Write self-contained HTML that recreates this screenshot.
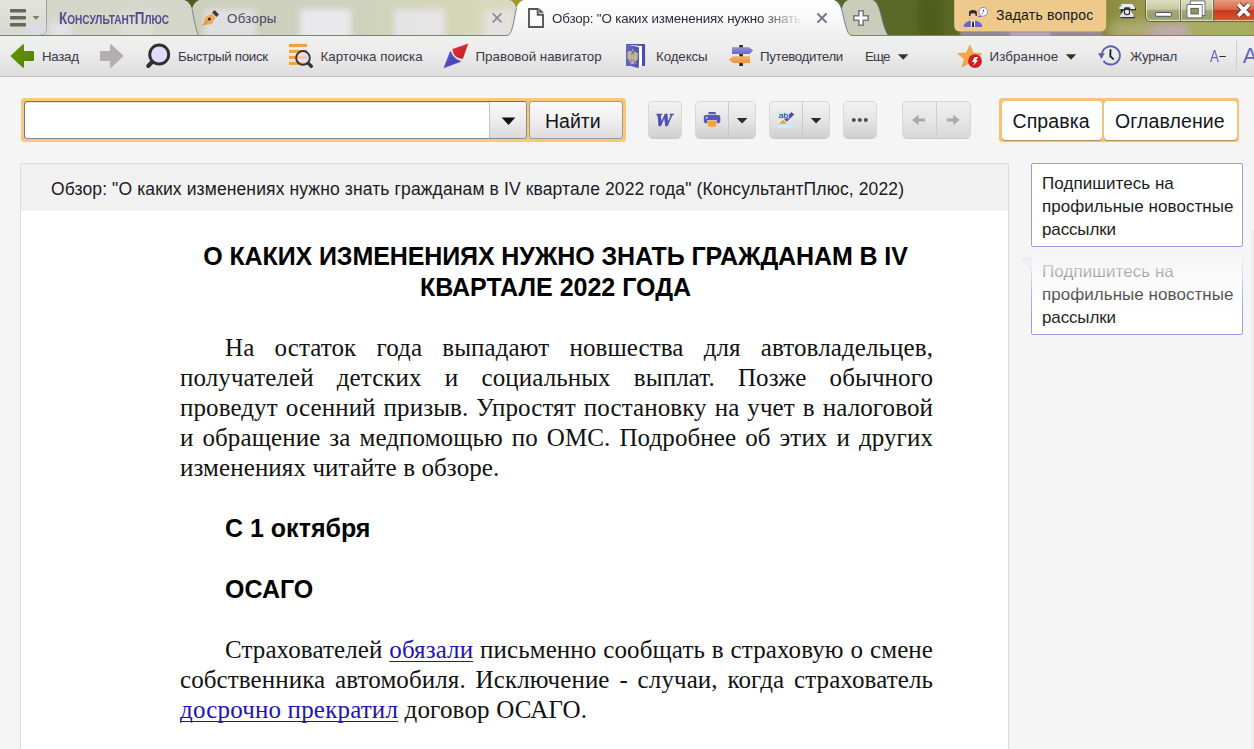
<!DOCTYPE html>
<html lang="ru">
<head>
<meta charset="utf-8">
<title>КонсультантПлюс</title>
<style>
*{box-sizing:border-box;margin:0;padding:0}
html,body{width:1254px;height:749px;overflow:hidden;background:#f5f5f5;font-family:"Liberation Sans",sans-serif;color:#222}
.abs{position:absolute}
#app{position:relative;width:1254px;height:749px;overflow:hidden;background:#f5f5f5}
/* ---------- tab bar ---------- */
#tabbar{position:absolute;left:0;top:0;width:1254px;height:36px;overflow:hidden;
  background:linear-gradient(90deg,#4c5a1c 0,#55621f 700px,#5b6828 900px,#5f6a2a 1000px,#85883a 1100px,#98964a 1135px,#a6a65e 1190px,#a4a85c 1254px)}
#tabbar svg{position:absolute;left:0;top:0}
.tl{position:absolute;white-space:nowrap;font-size:13.33px;line-height:16px;color:#3c3c50}
.sc{font-size:12.600px;text-transform:uppercase}
/* ---------- toolbar ---------- */
#toolbar{position:absolute;left:0;top:36px;width:1254px;height:41px;background:linear-gradient(#f0f0f0,#ececec 40%,#dddddd);border-bottom:1px solid #bdbdbd}
#toolbar svg{position:absolute;left:0;top:0}
.tb{position:absolute;top:13px;white-space:nowrap;font-size:13.33px;line-height:16px;color:#3a3846}
/* ---------- search row ---------- */
.oframe{position:absolute;background:#fcc878;border-radius:3px}
.gbtn{position:absolute;top:101px;height:38px;border-radius:5px;background:linear-gradient(#f2f2f2,#e5e5e5 50%,#cfcfcf);border:1px solid #d8d8d8;border-bottom-color:#c9c9c9}
/* ---------- document ---------- */
#doc{position:absolute;left:20px;top:163px;width:989px;height:600px;background:#fff;border:1px solid #dcdcdc}
#dochead{position:absolute;left:0;top:0;width:987px;height:47px;background:#f1f1f1}
#dochead span{position:absolute;left:30px;top:14px;font-size:17.500px;line-height:22px;white-space:nowrap;color:#1a1a22;letter-spacing:.12px}
.ser{font-family:"Liberation Serif",serif;font-size:25px;line-height:30px;color:#111;letter-spacing:.1px}
.bold{font-family:"Liberation Sans",sans-serif;font-weight:bold;font-size:25px;line-height:31px;color:#000}
.p{position:absolute;left:159px;width:753px}
.ln{display:block;height:30px;white-space:nowrap;text-align:justify;text-align-last:justify}
.ln.last{text-align-last:left}
a.lnk{color:#2212b4;text-decoration:underline;text-decoration-thickness:1px;text-decoration-skip-ink:none;text-underline-offset:3px}
/* ---------- side ---------- */
.side{position:absolute;left:1031px;width:212px;border:1px solid #9c9cde;border-radius:2px;background:#fff;font-size:17px;line-height:23px;padding:8px 0 0 10px;white-space:nowrap}
</style>
</head>
<body>
<div id="app">

<!-- TABBAR -->
<div id="tabbar">
<svg width="1254" height="36" viewBox="0 0 1254 36">
<defs>
  <filter id="bl" x="-20%" y="-20%" width="140%" height="140%"><feGaussianBlur stdDeviation="3"/></filter>
  <filter id="bl1" x="-10%" y="-100%" width="120%" height="300%"><feGaussianBlur stdDeviation="1.3"/></filter>
  <filter id="bl2" x="-20%" y="-40%" width="140%" height="180%"><feGaussianBlur stdDeviation="5"/></filter>
  <linearGradient id="gAct" x1="0" y1="0" x2="0" y2="1"><stop offset="0" stop-color="#ffffff"/><stop offset=".55" stop-color="#f8f8f8"/><stop offset="1" stop-color="#efefef"/></linearGradient>
  <linearGradient id="gInact" x1="0" y1="0" x2="1" y2="0"><stop offset="0" stop-color="#cbcfbc"/><stop offset=".45" stop-color="#cdd1be"/><stop offset=".8" stop-color="#d3d7b6"/><stop offset="1" stop-color="#d9dbc4"/></linearGradient>
  <linearGradient id="gMenu" x1="0" y1="0" x2="0" y2="1"><stop offset="0" stop-color="#e3e4dc"/><stop offset="1" stop-color="#d6d8cf"/></linearGradient>
  <linearGradient id="gRed" x1="0" y1="0" x2="0" y2="1"><stop offset="0" stop-color="#e89a80"/><stop offset=".45" stop-color="#d9674a"/><stop offset=".5" stop-color="#c93a1c"/><stop offset="1" stop-color="#d4572e"/></linearGradient>
  <linearGradient id="gWin" x1="0" y1="0" x2="0" y2="1"><stop offset="0" stop-color="#dcdec0"/><stop offset=".42" stop-color="#c6c9a2"/><stop offset=".5" stop-color="#a4a678"/><stop offset=".8" stop-color="#9aa068"/><stop offset="1" stop-color="#aeb27e"/></linearGradient>
  <clipPath id="cpT2"><path d="M199.5,0 C196,1 193.5,4 192,8.500 L186,36 L523,36 L516.500,8.500 C515,4 513,1 509.500,0 Z"/></clipPath>
</defs>
<!-- glass patches on right -->
<g filter="url(#bl2)">
  <rect x="918" y="-6" width="26" height="46" fill="#4d591a" opacity=".8"/>
  <rect x="1110" y="22" width="40" height="16" fill="#b9b787" opacity=".7"/>
  <rect x="1150" y="24" width="38" height="14" fill="#c4aebe" opacity=".9"/>
  <rect x="1190" y="24" width="64" height="14" fill="#a9b164" opacity=".8"/>
  <rect x="1000" y="30" width="60" height="8" fill="#9b8fa8" opacity=".55"/>
</g>
<rect x="505" y="0" width="24" height="12" fill="#a0962e"/>
<!-- tab 2 (inactive) -->
<path d="M199.5,0 C196,1 193.5,4 192,8.500 L186,36 L523,36 L516.500,8.500 C515,4 513,1 509.500,0 Z" fill="url(#gInact)"/>
<g clip-path="url(#cpT2)"><g filter="url(#bl)">
  <rect x="205" y="9" width="51" height="32" fill="#e6e4e8" opacity=".8"/>
  <rect x="300" y="9" width="51" height="32" fill="#ebe9ef" opacity=".95"/>
  <rect x="394" y="9" width="51" height="32" fill="#e8e5ea" opacity=".9"/>
  <rect x="484" y="10" width="30" height="30" fill="#e6e3e6" opacity=".8"/>
</g></g>
<!-- logo tab -->
<path d="M36,0 L184,0 C188,1 190.5,4 192,8.500 C194,18 195.5,30 199,36 L36,36 Z" fill="#d3d6c9"/>
<g filter="url(#bl)"><rect x="50" y="22" width="22" height="16" fill="#e4e2ea" opacity=".9"/><rect x="120" y="10" width="34" height="28" fill="#dfe0da" opacity=".8"/></g>
<path d="M192,8.500 C194,18 195.5,30 199,36" fill="none" stroke="#647a84" stroke-width="1" opacity=".85"/>
<!-- menu button -->
<path d="M0,0 L46.5,0 L46.5,29 Q46.5,35 40,35 L0,35 Z" fill="url(#gMenu)"/>
<path d="M46.5,0 L46.5,29 Q46.5,35 40,35" fill="none" stroke="#9aa0a0" stroke-width="1"/>
<g filter="url(#bl)"><rect x="28" y="24" width="16" height="12" fill="#dcdcf0" opacity=".9"/></g>
<rect x="10" y="9" width="16" height="3.6" rx=".8" fill="#66665a"/>
<rect x="10" y="16" width="16" height="3.6" rx=".8" fill="#66665a"/>
<rect x="10" y="23" width="16" height="3.6" rx=".8" fill="#66665a"/>
<path d="M32.5,16 L39.5,16 L36,20 Z" fill="#7d7d74"/>
<!-- new-tab button -->
<path d="M838,36 L841.600,9.300 C843,4 845,1 848,0 L873,0 C877,1.500 879.300,8 881,15 C883,23 885,31 888.500,36 Z" fill="#c9ccba"/><path d="M873,0 C877,1.500 879.300,8 881,15 C883,23 885,31 888.500,35.500" fill="none" stroke="#5f7488" stroke-width=".9" opacity=".8"/>
<path d="M858.800,10.800 h4.400 v5 h5 v4.400 h-5 v5 h-4.400 v-5 h-5 v-4.400 h5 Z" fill="#fdfdfd" stroke="#7a7a7a" stroke-width="1.600" stroke-linejoin="miter"/>
<!-- active tab -->
<path d="M524,0 C520,1 517.5,4 516.400,8.300 C514.500,17 513,29 510,33.500 Q508.800,35.400 506.500,36 L851.500,36 Q849.500,35 848,32.500 C845,26 843.500,16 841.600,9.300 C840,4 837.500,1 834.400,0 Z" fill="url(#gAct)"/>
<path d="M516.400,8.300 C514.500,17 513,29 510,33.500 Q508.800,35.400 506.500,35.500" fill="none" stroke="#5f7890" stroke-width="1" opacity=".9"/>
<path d="M834.400,0 C837.500,1 840,4 841.600,9.300 C843.500,16 845,26 848,32.500 Q849.500,35 851.500,35.500" fill="none" stroke="#5f7890" stroke-width="1" opacity=".9"/>
<!-- bottom line -->
<rect x="0" y="35" width="507" height="1" fill="#6f829c"/>
<rect x="851" y="35" width="403" height="1" fill="#6f829c"/>
<!-- pen icon (tab 2) -->
<g transform="translate(202,10)">
  <path d="M1,15.5 L3.2,7.2 L9.6,3.6 L13.6,7.6 L10,14 Z" fill="#f1ab57"/>
  <path d="M1,15.5 L6.6,9.9" stroke="#b9772d" stroke-width=".9" fill="none"/>
  <circle cx="7.4" cy="9" r="1.5" fill="#2b2b33"/>
  <path d="M10,2.6 L12.6,0 L17,4.4 L14.4,7 Z" fill="#3b3b45"/>
</g>
<!-- close x tab2 -->
<path d="M492.700,13.400 L501.500,22.300 M501.500,13.400 L492.700,22.300" stroke="#8e8c9c" stroke-width="1.800" fill="none"/>
<!-- doc icon active -->
<path d="M529,9 H537.700 V14.700 H543 V27 H529 Z" fill="#fcfcfc" stroke="#555" stroke-width="1.900" stroke-linejoin="miter"/>
<path d="M539.200,8.200 L543.900,12.700 L539.200,12.700 Z" fill="#555"/>
<!-- close x active -->
<path d="M817.400,13.500 L826.600,22.600 M826.600,13.500 L817.400,22.600" stroke="#707888" stroke-width="2" fill="none"/>
<!-- ask button -->
<g filter="url(#bl1)"><rect x="960" y="31.500" width="142" height="4" fill="#9d8cab"/><rect x="1010" y="32" width="40" height="4" fill="#b9a9c0"/></g>
<path d="M954.200,0 L1106.200,0 L1106.200,25.400 Q1106.200,31.500 1100,31.500 L960.400,31.500 Q954.200,31.500 954.200,25.400 Z" fill="#eec98c"/>
<!-- ask icon: person + bubble -->
<g>
  <path d="M963.900,26.900 L963.900,25.200 Q964.600,22.600 969.600,20.700 L972.900,20.200 L976.300,20.700 Q981.300,22.600 982,25.200 L982,26.900 Z" fill="#6a68c4"/>
  <path d="M970.900,20.200 L975,20.200 L975,26.900 L970.900,26.900 Z" fill="#fff"/>
  <path d="M972.200,21.600 L973.900,21.600 L974.100,26.900 L972,26.900 Z" fill="#23232b"/>
  <rect x="970.800" y="12.800" width="4.400" height="7.600" rx="2" fill="#f0c89a"/>
  <path d="M969,15.900 V12.700 Q969,9.900 973,9.900 Q976.900,9.900 976.900,12.700 V15.900 L975.500,15.900 V13.700 Q973,12.600 970.500,13.700 V15.900 Z" fill="#2a2e34"/>
  <circle cx="983.200" cy="11.800" r="4.300" fill="#fff" stroke="#6262d2" stroke-width="1" stroke-dasharray="1.500 .700"/>
  <ellipse cx="979.900" cy="16.400" rx="1.700" ry=".600" fill="#6262d2"/>
  <rect x="983" y="9.700" width="1.100" height="1.900" rx=".4" fill="#33333b"/><circle cx="982.500" cy="13.300" r=".700" fill="#7a7a86"/>
</g>
<!-- phone icon -->
<g transform="translate(1119,3.600)">
  <path d="M1.600,1.400 L14,1.400 L17,4.600 L17,6.600 L12.400,6.600 L11.600,8 L15.600,12.400 L15.600,14.600 L1.800,14.600 L1.800,13 Z" fill="#262a36" opacity=".9"/>
  <path d="M.3,4 L2.600,.4 L13.400,.4 L16,4 L16,5.400 L11.600,5.400 L10.600,3.600 L5.800,3.600 L4.800,5.400 L.3,5.400 Z" fill="#eceaf6"/>
  <path d="M5,6.400 L11.400,6.400 L14.800,11.600 L14.800,13.400 L1.200,13.400 L1.200,11.600 Z" fill="#e6e4f2"/>
  <circle cx="8" cy="8.400" r="2.700" fill="#e9e7f4" stroke="#2a2e3a" stroke-width="1.100"/>
  <circle cx="2" cy="2.200" r=".9" fill="#58d020"/><circle cx="10.600" cy="4" r=".7" fill="#58d020"/>
</g>
<!-- window buttons -->
<path d="M1145.5,0 L1145.5,16 Q1145.5,21.5 1151,21.5 L1254,21.5 L1254,0 Z" fill="url(#gWin)"/>
<rect x="1214" y="0" width="40" height="21" fill="url(#gRed)"/>
<path d="M1145.5,0 L1145.5,16 Q1145.5,21.5 1151,21.5 L1254,21.5" fill="none" stroke="#4a4f38" stroke-width="1" opacity=".75"/>
<path d="M1146.5,0 L1146.5,16 Q1146.5,20.5 1151,20.5 L1254,20.5" fill="none" stroke="#f3f4e4" stroke-width="1" opacity=".7"/>
<path d="M1180.5,0 V21 M1213.5,0 V21" stroke="#4a4f38" stroke-width="1" opacity=".7"/>
<path d="M1181.5,0 V20 M1179.5,0 V20 M1212.5,0 V20" stroke="#f3f4e4" stroke-width="1" opacity=".55"/>
<rect x="1155.700" y="12.500" width="15.600" height="3.800" rx=".6" fill="#fff" stroke="#4a5062" stroke-width="1"/>
<rect x="1192.200" y="2.800" width="10.900" height="10.800" fill="none" stroke="#4a5062" stroke-width="4.500"/>
<rect x="1192.200" y="2.800" width="10.900" height="10.800" fill="none" stroke="#fdfdfd" stroke-width="3"/>
<rect x="1188.900" y="6.400" width="11.400" height="9.500" fill="#8f9556" stroke="#4a5062" stroke-width="4.500"/>
<rect x="1188.900" y="6.400" width="11.400" height="9.500" fill="none" stroke="#fdfdfd" stroke-width="3"/>
<path d="M1238.300,4.300 L1249.200,15.800 M1249.200,4.300 L1238.300,15.800" stroke="#5a3a40" stroke-width="5.600" fill="none"/>
<path d="M1238.300,4.300 L1249.200,15.800 M1249.200,4.300 L1238.300,15.800" stroke="#fbfbfb" stroke-width="3.800" fill="none"/>
</svg>
<div class="tl" id="logo" style="left:58.500px;top:9px;line-height:20px;font-weight:bold;color:#5a4a8e;transform-origin:0 0;transform:scaleX(.8)"><span style="font-size:16.800px">К</span><span class="sc">онсультант</span><span style="font-size:16.800px">П</span><span class="sc">люс</span></div>
<div class="tl" style="left:227px;top:11px;letter-spacing:.27px;color:#47475b">Обзоры</div>
<div class="tl" id="acttitle" style="left:552px;top:11px;letter-spacing:-.15px;width:252px;overflow:hidden;color:#2e2c3c;-webkit-mask-image:linear-gradient(90deg,#000 208px,rgba(0,0,0,.12) 246px,transparent 252px);mask-image:linear-gradient(90deg,#000 208px,rgba(0,0,0,.12) 246px,transparent 252px)">Обзор: "О каких изменениях нужно знать гражданам в IV квартале 2022 года"</div>
<div class="tl" style="left:996px;top:7px;font-size:14px;letter-spacing:.22px;color:#17171d">Задать вопрос</div>
</div>

<!-- TOOLBAR -->
<div id="toolbar">
<svg width="1254" height="41" viewBox="0 36 1254 41">
<defs>
  <linearGradient id="gGreen" x1="0" y1="0" x2="1" y2="1"><stop offset="0" stop-color="#6a9a00"/><stop offset="1" stop-color="#4f7f00"/></linearGradient>
  <linearGradient id="gBook" x1="0" y1="0" x2="1" y2="0"><stop offset="0" stop-color="#6866c2"/><stop offset="1" stop-color="#5452b0"/></linearGradient>
  <linearGradient id="gPur" x1="0" y1="0" x2="0" y2="1"><stop offset="0" stop-color="#9290d2"/><stop offset="1" stop-color="#6c6ac0"/></linearGradient>
  <linearGradient id="gOr" x1="0" y1="0" x2="0" y2="1"><stop offset="0" stop-color="#f6b060"/><stop offset="1" stop-color="#ee9440"/></linearGradient>
  <linearGradient id="gRedN" x1="0" y1="0" x2="1" y2="1"><stop offset="0" stop-color="#e0383a"/><stop offset="1" stop-color="#c01820"/></linearGradient>
  <linearGradient id="gBlueN" x1="0" y1="0" x2="1" y2="1"><stop offset="0" stop-color="#5a58c8"/><stop offset="1" stop-color="#3e3cae"/></linearGradient>
</defs>
<!-- back arrow -->
<path d="M10.300,56 L22.600,44.500 Q24,43.400 24,45.200 L24,51 L32.800,51 Q34,51 34,52.200 L34,59.800 Q34,61 32.800,61 L24,61 L24,66.800 Q24,68.600 22.600,67.500 Z" fill="url(#gGreen)"/>
<!-- forward arrow -->
<path d="M123.700,56 L111.400,44.500 Q110,43.400 110,45.200 L110,51 L101.200,51 Q100,51 100,52.200 L100,59.800 Q100,61 101.200,61 L110,61 L110,66.800 Q110,68.600 111.400,67.500 Z" fill="#b1b0ac"/>
<!-- magnifier -->
<path d="M152.500,61.500 L148.200,66" stroke="#2f2f2f" stroke-width="4" stroke-linecap="round"/>
<circle cx="159.200" cy="54.500" r="9.500" fill="#dedcff" stroke="#303030" stroke-width="2.900"/>
<!-- card search -->
<g fill="#f0a232">
 <rect x="289" y="43.900" width="18.100" height="3"/><rect x="289" y="49.900" width="18.100" height="3"/><rect x="289" y="55.900" width="18.100" height="3"/><rect x="289" y="61.900" width="18.100" height="3"/>
</g>
<clipPath id="cpMag"><circle cx="303" cy="57.900" r="6.800"/></clipPath>
<circle cx="303" cy="57.900" r="6.850" fill="#e1ddff"/>
<g clip-path="url(#cpMag)" fill="#f5c9a2"><rect x="296" y="55.900" width="11.100" height="3"/><rect x="296" y="61.900" width="11.100" height="3"/></g>
<path d="M308.600,63.600 L311.300,66.300" stroke="#343434" stroke-width="3.400" stroke-linecap="round"/>
<circle cx="303" cy="57.900" r="6.850" fill="none" stroke="#343434" stroke-width="1.900"/>
<!-- navigator -->
<path d="M467.900,43.900 L452.700,49.200 Q453,57.500 462.600,58.800 Z" fill="url(#gRedN)" stroke="#d02025" stroke-width=".5" stroke-linejoin="round"/>
<path d="M450.400,51.200 L444,67.800 L460.900,61.400 Q453.400,58.800 450.400,51.200 Z" fill="url(#gBlueN)" stroke="#4a48ba" stroke-width=".5" stroke-linejoin="round"/>
<!-- codex book -->
<path d="M627,43.900 H644.100 Q645.100,43.900 645.100,44.900 V64.900 Q645.100,65.900 644.100,65.900 H627 Q626,65.900 626,64.900 V44.900 Q626,43.900 627,43.900 Z" fill="#5654b2"/>
<path d="M642,44.200 H644.300 Q644.900,44.300 644.900,45 V65 Q644.900,65.600 644.300,65.700 H642 Z" fill="#4d4bab"/>
<path d="M627.200,45 L642,45.900 L642,66.300 L638.700,67.300 L638.700,47.400 Z" fill="#fdfdff"/>
<path d="M626,44.700 L638.200,47 Q638.800,47.200 638.800,47.900 L638.800,67.400 Q638.800,68.200 638,68 L626,64.800 Z" fill="url(#gBook)"/>
<g fill="#d4c690" opacity=".85">
 <path d="M631.700,54 L629.600,50.600 L628.700,52 L627.600,51.400 L627.400,57.600 L628.500,60 L630,60.800 L631.700,59 Z"/>
 <path d="M633.400,54.300 L635.600,51.400 L636.400,52.800 L637.600,52.400 L637.800,58.400 L636.600,60.800 L635,61.500 L633.400,59.500 Z"/>
 <ellipse cx="632.550" cy="57" rx="1.300" ry="3.600"/>
 <circle cx="631" cy="52" r="1"/><circle cx="634.200" cy="52.500" r="1"/>
 <path d="M632.600,48.600 L633.400,50.600 L632.600,51.600 L631.800,50.600 Z"/>
 <path d="M631.500,60.400 L633.700,60.800 L634.600,64.600 L632.600,63.800 L630.700,64.300 Z"/>
 <path d="M631.200,60 L629.400,63 M634,60.600 L636.200,63.600" stroke="#d9ca92" stroke-width=".9" fill="none"/>
</g>
<!-- signpost -->
<rect x="739.300" y="45" width="3.600" height="21" fill="#2a2a2e"/>
<path d="M732,47.200 L749.400,47.200 L753.200,50.600 L749.400,54 L732,54 Z" fill="url(#gPur)"/>
<path d="M750,56.200 L733,56.200 L729,59.600 L733,63 L750,63 Z" fill="url(#gOr)"/>
<!-- Еще arrow -->
<path d="M898,54.200 L908.400,54.200 L903.200,59.800 Z" fill="#333"/>
<!-- star -->
<path d="M969.800,45.200 L973,53 L981.800,53.600 L975.200,59 L977.400,67 L969.800,62.600 L962.200,67 L964.400,59 L957.800,53.600 L966.600,53 Z" fill="#f2a646" stroke="#f2a646" stroke-width="1" stroke-linejoin="round"/>
<circle cx="975" cy="61.200" r="6.900" fill="#d01c24"/>
<path d="M974.800,57 L978.200,57 L975.900,60.200 L978,60.200 L973.200,66.100 L974.500,62.100 L972,62.100 Z" fill="#fff"/>
<!-- Избранное arrow -->
<path d="M1065.800,54.200 L1076.200,54.200 L1071,59.800 Z" fill="#333"/>
<!-- journal -->
<path d="M1101.800,54.100 A9.100,9.100 0 1 1 1103.500,60.900" fill="none" stroke="#5e5cba" stroke-width="1.900"/>
<path d="M1098,53.200 L1104.800,53.200 L1101.400,58.900 Z" fill="#5e5cba"/>
<path d="M1110.500,49.200 L1110.300,56.400 L1113.800,59.400" fill="none" stroke="#1c1c1e" stroke-width="1.800" stroke-linejoin="miter"/>
<!-- separator -->
<rect x="1236" y="41" width="1" height="30" fill="#cfcfcf"/>
</svg>
<div class="tb" style="left:42px;letter-spacing:-.3px">Назад</div>
<div class="tb" style="left:178px;letter-spacing:-.3px">Быстрый поиск</div>
<div class="tb" style="left:320.500px;letter-spacing:.02px">Карточка поиска</div>
<div class="tb" style="left:475.500px;letter-spacing:.01px">Правовой навигатор</div>
<div class="tb" style="left:656px;letter-spacing:-.1px">Кодексы</div>
<div class="tb" style="left:760px;letter-spacing:-.34px">Путеводители</div>
<div class="tb" style="left:865px;letter-spacing:-.81px">Еще</div>
<div class="tb" style="left:989.500px;letter-spacing:.13px">Избранное</div>
<div class="tb" style="left:1130px;letter-spacing:-.27px">Журнал</div>
<div class="tb" style="left:1209.700px;top:12px;font-size:16px;line-height:18px;color:#6462c0"><span style="display:inline-block;transform-origin:0 50%;transform:scaleX(.84)">A</span><span style="color:#2a2a2a;font-size:13px;position:relative;top:-1.500px;left:-1.600px">&#8722;</span></div>
<div class="tb" style="left:1242.700px;top:8px;font-size:22px;line-height:24px;color:#6462c0">A</div>
</div>

<!-- SEARCH ROW -->
<div id="searchrow">
<div class="oframe" style="left:21px;top:98px;width:605px;height:44px"></div>
<div class="abs" style="left:24px;top:101px;width:503px;height:38px;background:#fff;border:1px solid #8a8a8a;border-top-color:#6f6f6f;border-left-color:#777;border-radius:3px;box-shadow:inset 0 1px 1px rgba(0,0,0,.12)"></div>
<div class="abs" style="left:489px;top:102px;width:37px;height:36px;border-left:1px solid #c4c4c4;border-radius:0 2px 2px 0;background:linear-gradient(#f8f8f8,#ededed 50%,#dadada)"></div>
<svg class="abs" style="left:498px;top:114px" width="22" height="14" viewBox="0 0 22 14"><path d="M3.700,3.600 L17.300,3.600 L10.500,11 Z" fill="#111"/></svg>
<div class="abs" style="left:529px;top:101px;width:94px;height:38px;border:1px solid #9a9a9a;border-radius:3px;background:linear-gradient(#fbfbfb,#efefef 50%,#dcdcdc)"></div>
<div class="abs" id="find" style="left:545px;top:109px;font-size:19.500px;line-height:24px;letter-spacing:0;color:#15151b;white-space:nowrap">Найти</div>

<div class="gbtn" style="left:648px;width:34px"></div>
<div class="abs" id="wbtn" style="left:655.500px;top:107px;-webkit-text-stroke:.7px #514fb2;font-family:'DejaVu Serif',serif;font-weight:bold;font-style:italic;font-size:17px;line-height:26px;color:#514fb2;transform-origin:0 50%;transform:scaleX(.85)">W</div>

<div class="gbtn" style="left:695px;width:61px"></div>
<div class="abs" style="left:728px;top:102px;width:1px;height:36px;background:#c9c9c9"></div>
<svg class="abs" style="left:700px;top:108px" width="24" height="24" viewBox="700 108 24 24">
  <path d="M708.300,114.300 V113.400 Q708.300,112.100 709.600,112.100 H714.700 Q716,112.100 716,113.400 V114.300 Z" fill="#5856b6"/>
  <path d="M705.800,115 H718.300 Q720.300,115 720.300,117 V121.300 Q720.300,123.200 718.300,123.200 H705.800 Q703.800,123.200 703.800,121.300 V117 Q703.800,115 705.800,115 Z" fill="#5856b6"/>
  <rect x="705.900" y="116.900" width="1.600" height="1.500" fill="#f0f0fa"/>
  <rect x="707.300" y="120" width="9.400" height="7.200" rx="1" fill="#e4e4e4"/>
  <rect x="707.900" y="120.600" width="8.200" height="6.100" rx=".8" fill="#f2a23e"/>
</svg>
<svg class="abs" style="left:734px;top:114px" width="16" height="12" viewBox="0 0 16 12"><path d="M2.700,4 L13.500,4 L8.100,9.400 Z" fill="#2b2b2b"/></svg>

<div class="gbtn" style="left:769px;width:61px"></div>
<div class="abs" style="left:802px;top:102px;width:1px;height:36px;background:#c9c9c9"></div>
<svg class="abs" style="left:774px;top:108px" width="24" height="24" viewBox="774 108 24 24">
  <rect x="777.900" y="124.800" width="16.200" height="3.100" fill="#c9ebfe"/>
  <path d="M791.500,111.900 L794.200,114.400 L786.700,121.700 L784.200,119.300 Z" fill="#4e4cb0"/>
  <path d="M779.100,123.700 L782.800,119.900 L784.600,121 L786,123.700 Z" fill="#e9a234"/>
  <rect x="777.900" y="111.900" width="11" height="6.500" fill="#c9ebfe"/>
  <text x="778.800" y="117.700" font-family="Liberation Sans, sans-serif" font-size="8" textLength="9.400" lengthAdjust="spacingAndGlyphs" fill="#23272f">ab</text>
</svg>
<svg class="abs" style="left:808px;top:114px" width="16" height="12" viewBox="0 0 16 12"><path d="M2.800,4 L13.400,4 L8.100,9.400 Z" fill="#2b2b2b"/></svg>

<div class="gbtn" style="left:843px;width:34px"></div>
<svg class="abs" style="left:850px;top:116px" width="20" height="8" viewBox="850 116 20 8"><circle cx="853.800" cy="120" r="2" fill="#4e4e4e"/><circle cx="859.800" cy="120" r="2" fill="#4e4e4e"/><circle cx="865.800" cy="120" r="2" fill="#4e4e4e"/></svg>

<div class="gbtn" style="left:902px;width:69px;background:linear-gradient(#efefef,#e7e7e7 45%,#d8d8d8)"></div>
<div class="abs" style="left:936px;top:102px;width:1px;height:36px;background:#cfcfcf"></div>
<svg class="abs" style="left:908px;top:112px" width="56" height="16" viewBox="908 112 56 16">
  <path d="M912,120 L918.600,114.800 L918.600,118.400 L925,118.400 L925,121.600 L918.600,121.600 L918.600,125.200 Z" fill="#ababab"/>
  <path d="M959.800,120 L953.200,114.800 L953.200,118.400 L946.800,118.400 L946.800,121.600 L953.200,121.600 L953.200,125.200 Z" fill="#ababab"/>
</svg>

<div class="oframe" style="left:999px;top:98px;width:240px;height:44px;background:#f6c27a"></div>
<div class="abs" style="left:1002px;top:100.500px;width:99.500px;height:39px;background:#fff;border-radius:4px;box-shadow:0 1px 0 #b98d58"></div>
<div class="abs" style="left:1104px;top:100.500px;width:132.500px;height:39px;background:#fff;border-radius:4px;box-shadow:0 1px 0 #b98d58"></div>
<div class="abs" style="left:1012.500px;top:109px;font-size:19.500px;line-height:24px;letter-spacing:.1px;color:#15151b;white-space:nowrap">Справка</div>
<div class="abs" style="left:1115px;top:109px;font-size:19.500px;line-height:24px;letter-spacing:.11px;color:#15151b;white-space:nowrap">Оглавление</div>
</div>

<!-- DOCUMENT -->
<div id="doc">
  <div id="dochead"><span>Обзор: "О каких изменениях нужно знать гражданам в IV квартале 2022 года" (КонсультантПлюс, 2022)</span></div>
  <div class="bold" id="ttl" style="position:absolute;left:158px;top:77px;width:753px;text-align:center;letter-spacing:-.1px">О КАКИХ ИЗМЕНЕНИЯХ НУЖНО ЗНАТЬ ГРАЖДАНАМ В IV<br><span style="letter-spacing:0">КВАРТАЛЕ 2022 ГОДА</span></div>
  <div class="ser p" id="p1" style="top:169px"><span class="ln" style="padding-left:45px">На остаток года выпадают новшества для автовладельцев,</span><span class="ln">получателей детских и социальных выплат. Позже обычного</span><span class="ln">проведут осенний призыв. Упростят постановку на учет в налоговой</span><span class="ln">и обращение за медпомощью по ОМС. Подробнее об этих и других</span><span class="ln last">изменениях читайте в обзоре.</span></div>
  <div class="bold" id="h1" style="position:absolute;left:204px;top:349px;white-space:nowrap">С 1 октября</div>
  <div class="bold" id="h2" style="position:absolute;left:204px;top:410px;white-space:nowrap">ОСАГО</div>
  <div class="ser p" id="p2" style="top:471px"><span class="ln" style="padding-left:45px">Страхователей <a class="lnk">обязали</a> письменно сообщать в страховую о смене</span><span class="ln">собственника автомобиля. Исключение - случаи, когда страхователь</span><span class="ln last" style="letter-spacing:.18px"><a class="lnk">досрочно прекратил</a> договор ОСАГО.</span></div>
</div>

<div class="abs" style="left:1251px;top:230px;width:3px;height:519px;background:linear-gradient(90deg,rgba(0,0,0,.02),rgba(0,0,0,.05))"></div>
<!-- SIDE -->
<div id="side">
<div class="side" style="top:163px;height:84px;color:#1b1b21"><div style="letter-spacing:.06px">Подпишитесь на</div><div style="letter-spacing:.04px">профильные новостные</div><div style="letter-spacing:-.14px">рассылки</div></div>
<div class="side" id="side2" style="top:251px;height:84px;color:#1b1b21"><div style="letter-spacing:.06px">Подпишитесь на</div><div style="letter-spacing:.04px">профильные новостные</div><div style="letter-spacing:-.14px">рассылки</div></div>
<svg class="abs" style="left:1020px;top:255px" width="14" height="18" viewBox="0 0 14 18"><path d="M11.500,4 L2.500,4 L11.500,14.500" fill="#f3f3f5" stroke="#e3e3e9" stroke-width="1"/></svg>
<div class="abs" style="left:1031px;top:248px;width:215px;height:84px;background:linear-gradient(rgba(245,245,245,1) 0,rgba(245,245,245,1) 4px,rgba(245,245,245,.9) 12px,rgba(246,246,246,.72) 23px,rgba(247,247,247,.26) 46px,rgba(250,250,250,.03) 69px,rgba(255,255,255,0) 84px)"></div>
</div>

</div>
</body>
</html>
